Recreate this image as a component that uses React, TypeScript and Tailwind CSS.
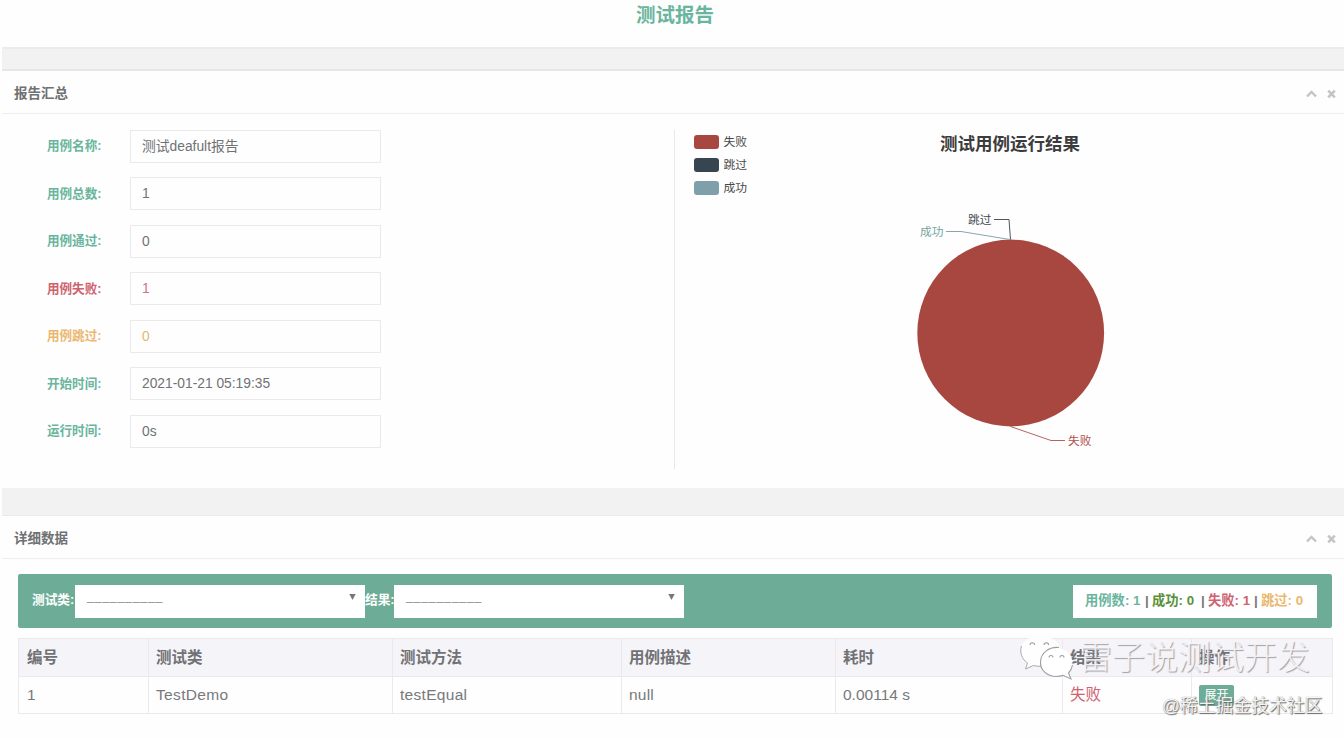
interface SummaryField {
  label: string;
  value: string;
  labelColor: string;
  valueColor: string;
}

const summaryFields: SummaryField[] = [
  { label: "用例名称:", value: "测试deafult报告", labelColor: "text-[#6ab59d]", valueColor: "text-[#707274]" },
  { label: "用例总数:", value: "1", labelColor: "text-[#6ab59d]", valueColor: "text-[#707274]" },
  { label: "用例通过:", value: "0", labelColor: "text-[#6ab59d]", valueColor: "text-[#707274]" },
  { label: "用例失败:", value: "1", labelColor: "text-[#d0626f]", valueColor: "text-[#d0727e]" },
  { label: "用例跳过:", value: "0", labelColor: "text-[#eab870]", valueColor: "text-[#e8b672]" },
  { label: "开始时间:", value: "2021-01-21 05:19:35", labelColor: "text-[#6ab59d]", valueColor: "text-[#707274]" },
  { label: "运行时间:", value: "0s", labelColor: "text-[#6ab59d]", valueColor: "text-[#707274]" },
];

const legend = [
  { name: "失败", color: "bg-[#a8473f]" },
  { name: "跳过", color: "bg-[#364550]" },
  { name: "成功", color: "bg-[#7f9fab]" },
];

const columns = [
  { title: "编号", width: "w-[130px]" },
  { title: "测试类", width: "w-[244px]" },
  { title: "测试方法", width: "w-[229px]" },
  { title: "用例描述", width: "w-[214px]" },
  { title: "耗时", width: "w-[227px]" },
  { title: "结果", width: "w-[129px]" },
  { title: "操作", width: "w-[141px]" },
];

const rows = [
  { id: "1", className: "TestDemo", method: "testEqual", desc: "null", time: "0.00114 s", result: "失败" },
];

function PanelHeader({ title }: { title: string }) {
  return (
    <div className="flex h-[43px] items-center justify-between border-b border-[#eeeeee] pl-3 pr-2">
      <h2 className="pt-[3px] text-[13.5px] leading-5 font-bold text-[#6f7072]">{title}</h2>
      <div className="flex items-center gap-[10px] pt-[3px]">
        <svg className="h-2.5 w-[11px]" viewBox="0 0 11 10" fill="none" stroke="#c4c4c4" strokeWidth="2.4">
          <path d="M1 7.500L5.500 3L10 7.500" />
        </svg>
        <svg className="h-2.5 w-[9px]" viewBox="0 0 9 10" fill="none" stroke="#c4c4c4" strokeWidth="2.6">
          <path d="M1.200 1.700L7.800 8.300M7.800 1.700L1.200 8.300" />
        </svg>
      </div>
    </div>
  );
}

function PieChart() {
  return (
    <svg className="h-[260px] w-[220px]" viewBox="900 200 220 260" fontSize="11.7">
      <circle cx="1010.7" cy="333" r="93.4" fill="#a8473f" />
      <polyline points="994,219.5 1009,219.5 1010.5,239.5" fill="none" stroke="#4b565f" />
      <polyline points="946,231.5 961,231.5 1010,239.5" fill="none" stroke="#8ba6ab" />
      <polyline points="1010.5,426.5 1051,440.5 1065,440.5" fill="none" stroke="#b4655f" />
      <text x="968" y="223.7" fill="#3f4a53">跳过</text>
      <text x="920" y="235.5" fill="#75a59f">成功</text>
      <text x="1068" y="445" fill="#b0504a">失败</text>
    </svg>
  );
}

function Select() {
  return (
    <div className="flex h-[33px] w-[290px] justify-between bg-white pl-3 pr-[9px] text-[12.2px] leading-[22px] font-normal tracking-[0.84px] text-[#8b8d8f]">
      <span>__________</span>
      <svg className="mt-[9px] h-[6px] w-[7px]" viewBox="0 0 7 6">
        <path d="M0.3 0h6.4L3.5 6z" fill="#777" />
      </svg>
    </div>
  );
}

function Watermarks() {
  return (
    <>
      <div className="absolute top-[632px] left-[1018px] flex">
        <svg className="h-[50px] w-[56px]" viewBox="0 0 56 50">
          <path
            d="M22 4C11 4 2.500 10 2.500 19c0 5 2 9 7 12l-2 6 8-4c3 1 7 1 10 1 10 0 17-6 17-15S33 4 22 4z"
            fill="#fff"
            fillOpacity="0.88"
          />
          <path d="M3.500 14C1.500 20 3.500 27 9.500 31l-2 6 8-3.500c2.500.6 5 1 8 .8" fill="none" stroke="#aaa8ad" />
          <path
            d="M38 16c-9 0-15.500 6.500-15.500 14.500S29 44.500 38 44.500c2.500 0 5-.3 7-1.200l8 3.700-2.500-6.500c2.500-2.500 4-6 4-10C54.500 22.500 47 16 38 16z"
            fill="#fff"
            fillOpacity="0.92"
          />
          <path
            d="M41 15.500c-10-1-18 5.500-18.500 14C22 38 29 44.500 38 44.500c2.500 0 5-.3 7-1.200l8 3.700-2.500-6c2-2 3.500-5 4-8"
            fill="none"
            stroke="#a09ea3"
            strokeWidth="1.1"
          />
          <g fill="none" stroke="#9c9a9f" strokeWidth="1.100">
            <path d="M12 13a2.300 2.300 0 1 1 4.600 0M26 13a2.300 2.300 0 1 1 4.600 0" />
            <path d="M31 25.500a2 2 0 1 1 4 0M42 25.500a2 2 0 1 1 4 0" />
          </g>
        </svg>
        <span className="ml-[5px] pt-0.5 text-[33px] leading-[48px] font-light whitespace-nowrap text-[#f8f7fa]/90 [text-shadow:1px_1px_1px_#a09ea3]">
          雷子说测试开发
        </span>
      </div>
      <div className="absolute top-[694px] left-[1162px] text-[17.8px] leading-6 whitespace-nowrap text-white/90 [text-shadow:1px_1px_1px_#666,0_0_1px_#888]">
        @稀土掘金技术社区
      </div>
    </>
  );
}

export default function App() {
  return (
    <div className="relative h-[738px] w-[1344px] overflow-hidden bg-[#fefefe] pl-0.5 font-['Liberation_Sans','Noto_Sans_CJK_SC',sans-serif]">
      <header className="h-[47px] pt-px text-center">
        <h1 className="pl-1 text-[19.5px] leading-7 font-bold text-[#6ab59d]">测试报告</h1>
      </header>
      <div className="h-6 border-t-2 border-b-2 border-t-[#ececec] border-b-[#e6e6e6] bg-[#f2f2f2]" />

      {/* Summary */}
      <section>
        <PanelHeader title="报告汇总" />
        <div className="flex h-[374px]">
          <div className="flex w-[672px] flex-col gap-[14.5px] pt-[15.5px]">
            {summaryFields.map((field) => (
              <div key={field.label} className="flex h-[33px] items-center">
                <label className={`w-32 pr-[28.5px] text-right text-[12.6px] leading-5 font-bold ${field.labelColor}`}>
                  {field.label}
                </label>
                <div className={`h-[33px] w-[250.5px] border border-[#eaeaea] pl-[11px] text-[13.8px] leading-8 ${field.valueColor}`}>
                  {field.value}
                </div>
              </div>
            ))}
          </div>
          <div className="mt-4 flex h-[339px] flex-1 border-l border-[#e8e8e8]">
            <ul className="w-[225px] space-y-[3.3px] pt-[1.5px] pl-[19px]">
              {legend.map((item) => (
                <li key={item.name} className="flex items-center gap-[4.5px] text-[11.8px] leading-5 text-[#4a4a4a]">
                  <span className={`h-3.5 w-[25px] rounded-[3px] ${item.color}`} />
                  {item.name}
                </li>
              ))}
            </ul>
            <div className="flex w-[220px] flex-col items-center">
              <h3 className="h-[70px] text-[17.5px] leading-7 font-bold text-[#3c3c3c]">测试用例运行结果</h3>
              <PieChart />
            </div>
          </div>
        </div>
      </section>
      <div className="h-7 border-b border-[#e9e9e9] bg-[#f2f2f2]" />

      {/* Details */}
      <section>
        <PanelHeader title="详细数据" />
        <div className="pt-[15px] pr-3 pl-4">
          <div className="flex h-[54px] items-center rounded-[2px] bg-[#6dad97] pr-[15px] pl-3.5 text-[12.7px] font-bold text-white">
            <span className="w-[43px] whitespace-nowrap">测试类:</span>
            <Select />
            <span className="w-[29px] whitespace-nowrap">结果:</span>
            <Select />
            <div className="ml-auto flex h-[33px] w-[244px] items-center bg-white pl-3 text-[13.3px] whitespace-pre">
              <span className="w-[60px] text-[#6ab59d]">用例数: 1</span>
              <span className="w-[7px] text-[#777]">|</span>
              <span className="w-[49px] text-[#5a9138]">成功: 0</span>
              <span className="w-[7px] text-[#777]">|</span>
              <span className="w-[46px] text-[#d0626f]">失败: 1</span>
              <span className="w-[7px] text-[#777]">|</span>
              <span className="text-[#eab870]">跳过: 0</span>
            </div>
          </div>

          <table className="mt-2.5 w-[1314px] table-fixed border-collapse border border-[#ebe9ed] text-[15.5px] leading-5 text-[#77797b]">
            <thead>
              <tr className="h-[38px] bg-[#f5f4f8] text-left text-[#717275]">
                {columns.map((column) => (
                  <th key={column.title} className={`border border-[#ebe9ed] px-[7px] first:pl-2 ${column.width}`}>
                    {column.title}
                  </th>
                ))}
              </tr>
            </thead>
            <tbody>
              {rows.map((row) => (
                <tr key={row.id} className="h-[37px]">
                  <td className="border border-[#ebe9ed] px-2">{row.id}</td>
                  <td className="border border-[#ebe9ed] px-[7px] tracking-[0.35px]">{row.className}</td>
                  <td className="border border-[#ebe9ed] px-[7px] tracking-[0.3px]">{row.method}</td>
                  <td className="border border-[#ebe9ed] px-[7px] tracking-[0.2px]">{row.desc}</td>
                  <td className="border border-[#ebe9ed] px-[7px]">{row.time}</td>
                  <td className="border border-[#ebe9ed] px-[7px] text-[#d0626f]">{row.result}</td>
                  <td className="border border-[#ebe9ed] px-[7px]">
                    <button className="block h-[21px] w-[35px] rounded-[2px] bg-[#6dad97] text-[12px] leading-5 text-white">
                      展开
                    </button>
                  </td>
                </tr>
              ))}
            </tbody>
          </table>
        </div>
      </section>

      <Watermarks />
    </div>
  );
}
